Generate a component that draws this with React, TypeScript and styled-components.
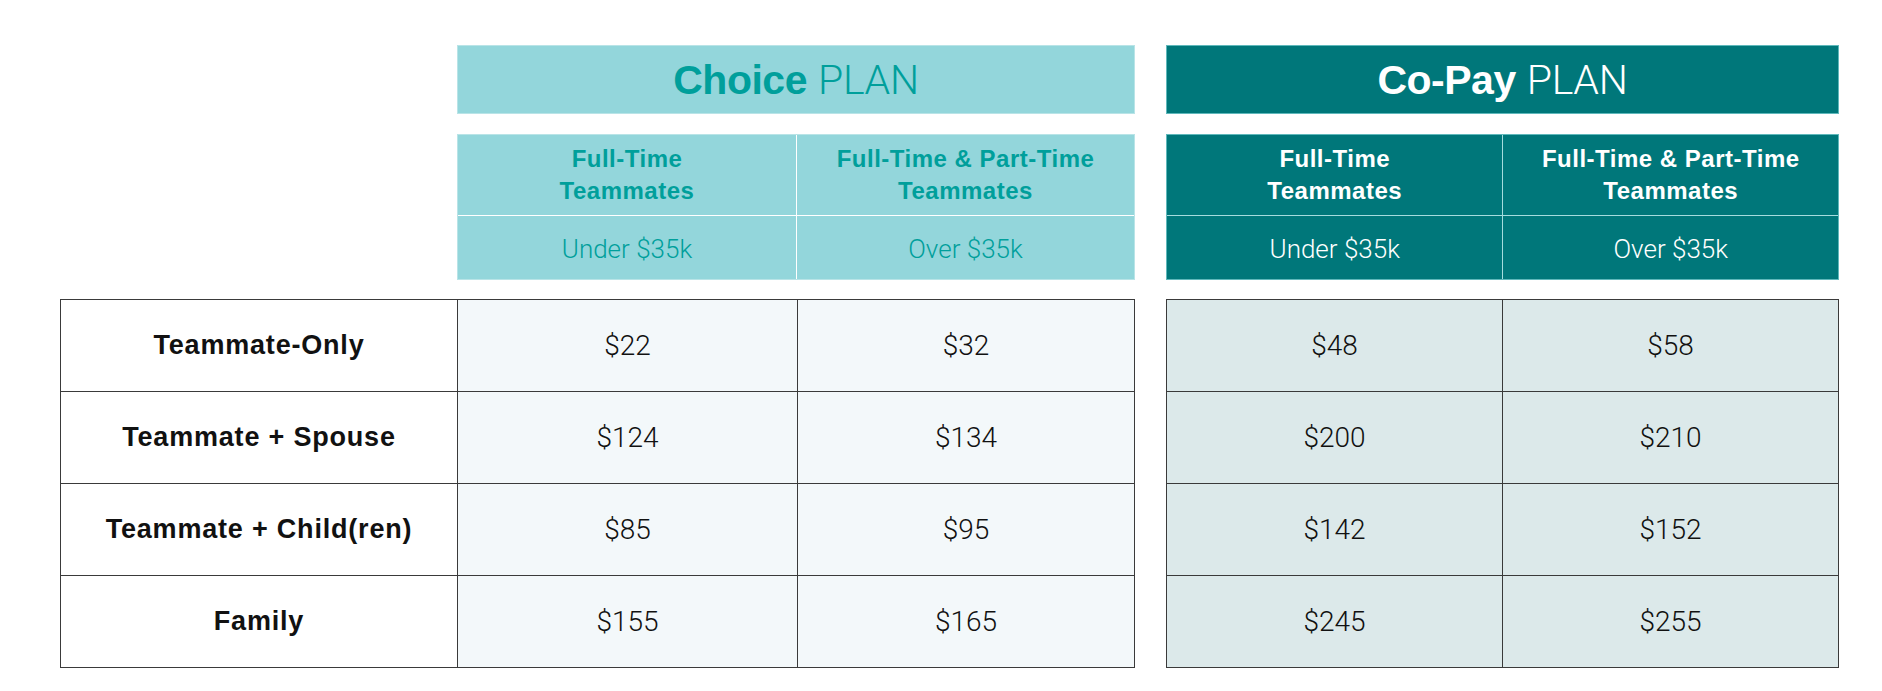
import React from "react";
import styled, { createGlobalStyle, css } from "styled-components";

const GlobalStyle = createGlobalStyle`
  html, body { margin: 0; padding: 0; background: #ffffff; }
  body { font-family: "Liberation Sans", Arial, sans-serif; }
`;

type Variant = "choice" | "copay";

const palette = {
  choice: { head: "#93d6db", text: "#009f9b", line: "#ffffff", cell: "#f3f8fa", edge: "#b9e4e7" },
  copay: { head: "#00777a", text: "#ffffff", line: "#a6dcde", cell: "#dce9ea", edge: "#5fb8bb" },
};

const Page = styled.div`
  display: flex;
  align-items: flex-start;
  gap: 31px;
  padding: 45px 0 0 60px;
`;

const PlanColumn = styled.section<{ $width: number }>`
  display: flex;
  flex-direction: column;
  width: ${(p) => p.$width}px;
`;

const HeaderBlock = styled.div<{ $indent: number }>`
  display: flex;
  flex-direction: column;
  margin-left: ${(p) => p.$indent}px;
`;

const PlanHeader = styled.h2<{ $v: Variant }>`
  margin: 0;
  height: 69px;
  box-sizing: border-box;
  display: flex;
  align-items: center;
  justify-content: center;
  background: ${(p) => palette[p.$v].head};
  color: ${(p) => palette[p.$v].text};
  font-size: 41px;
  line-height: 1;
  font-weight: 400;
  border: 1px solid ${(p) => palette[p.$v].edge};
  padding-top: 2px;
`;

const PlanName = styled.strong`
  font-weight: 700;
  margin-right: 11px;
  letter-spacing: -0.5px;
`;

const PlanWord = styled.span`
  font-family: Roboto, "Liberation Sans", sans-serif;
  font-weight: 300;
  letter-spacing: -0.3px;
`;

const SubTable = styled.div<{ $v: Variant }>`
  margin-top: 20px;
  display: grid;
  grid-template-columns: 340fr 338fr;
  grid-template-rows: 81px 63px;
  background: ${(p) => palette[p.$v].head};
  border: 1px solid ${(p) => palette[p.$v].edge};
  box-sizing: border-box;
`;

const SubCell = styled.div<{ $v: Variant; $kind: "group" | "income"; $last: boolean; $bottom: boolean }>`
  display: flex;
  align-items: center;
  justify-content: center;
  text-align: center;
  color: ${(p) => palette[p.$v].text};
  border-right: ${(p) => (p.$last ? "none" : `1px solid ${palette[p.$v].line}`)};
  border-bottom: ${(p) => (p.$bottom ? `1px solid ${palette[p.$v].line}` : "none")};
  ${(p) =>
    p.$kind === "group"
      ? css`
          font-weight: 700;
          font-size: 24px;
          line-height: 32px;
          letter-spacing: 0.5px;
          padding-top: 0;
        `
      : css`
          font-family: Roboto, "Liberation Sans", sans-serif;
          font-weight: 300;
          font-size: 26px;
          padding-top: 2px;
        `}
`;

const BodyTable = styled.div<{ $cols: string }>`
  margin-top: 19px;
  display: grid;
  grid-template-columns: ${(p) => p.$cols};
  grid-auto-rows: 92px;
  border-top: 1.5px solid #3a3a3a;
  border-left: 1.5px solid #3a3a3a;
  box-sizing: border-box;
`;

const BodyCell = styled.div<{ $bg: string; $label?: boolean }>`
  display: flex;
  align-items: center;
  justify-content: center;
  background: ${(p) => p.$bg};
  border-right: 1.5px solid #3a3a3a;
  border-bottom: 1.5px solid #3a3a3a;
  color: #111111;
  ${(p) =>
    p.$label
      ? css`
          font-weight: 700;
          font-size: 27px;
          letter-spacing: 0.8px;
        `
      : css`
          font-family: Roboto, "Liberation Sans", sans-serif;
          font-weight: 300;
          font-size: 28px;
        `}
`;

const labels = ["Teammate-Only", "Teammate + Spouse", "Teammate + Child(ren)", "Family"];

const plans: { v: Variant; name: string; width: number; prices: [string, string][] }[] = [
  {
    v: "choice",
    name: "Choice",
    width: 1075,
    prices: [
      ["$22", "$32"],
      ["$124", "$134"],
      ["$85", "$95"],
      ["$155", "$165"],
    ],
  },
  {
    v: "copay",
    name: "Co-Pay",
    width: 673,
    prices: [
      ["$48", "$58"],
      ["$200", "$210"],
      ["$142", "$152"],
      ["$245", "$255"],
    ],
  },
];

const groups = [
  ["Full-Time", "Teammates"],
  ["Full-Time & Part-Time", "Teammates"],
];
const incomes = ["Under $35k", "Over $35k"];

export default function App() {
  return (
    <>
      <GlobalStyle />
      <Page>
        {plans.map((plan, pi) => {
          const withLabels = pi === 0;
          const bodyCols = withLabels ? "397px 340px 1fr" : "1fr 1fr";
          return (
            <PlanColumn key={plan.v} $width={plan.width}>
              <HeaderBlock $indent={withLabels ? 397 : 0}>
                <PlanHeader $v={plan.v}>
                  <PlanName>{plan.name}</PlanName>
                  <PlanWord>PLAN</PlanWord>
                </PlanHeader>
                <SubTable $v={plan.v}>
                  {groups.map((g, i) => (
                    <SubCell key={"g" + i} $v={plan.v} $kind="group" $last={i === 1} $bottom>
                      {g[0]}
                      <br />
                      {g[1]}
                    </SubCell>
                  ))}
                  {incomes.map((t, i) => (
                    <SubCell key={"i" + i} $v={plan.v} $kind="income" $last={i === 1} $bottom={false}>
                      {t}
                    </SubCell>
                  ))}
                </SubTable>
              </HeaderBlock>
              <BodyTable $cols={bodyCols}>
                {plan.prices.map((row, ri) => (
                  <React.Fragment key={ri}>
                    {withLabels && (
                      <BodyCell $bg="#ffffff" $label>
                        {labels[ri]}
                      </BodyCell>
                    )}
                    {row.map((price, ci) => (
                      <BodyCell key={ci} $bg={palette[plan.v].cell}>
                        {price}
                      </BodyCell>
                    ))}
                  </React.Fragment>
                ))}
              </BodyTable>
            </PlanColumn>
          );
        })}
      </Page>
    </>
  );
}
